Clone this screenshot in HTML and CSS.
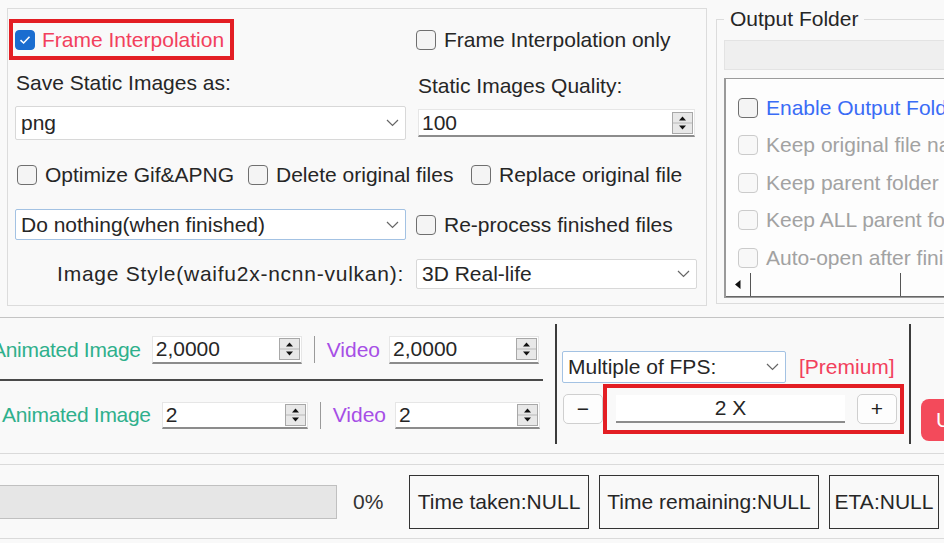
FILE: index.html
```html
<!DOCTYPE html>
<html>
<head>
<meta charset="utf-8">
<link rel="stylesheet" href="styles.css">
</head>
<body>
<div class="top">
  <div class="opts">
    <div class="row r1">
      <div class="cell-l">
        <label class="chk hl"><span class="box checked"><svg width="12" height="10" viewBox="0 0 12 10"><path d="M1.5 5.2 L4.6 8 L10.5 1.8" fill="none" stroke="#fff" stroke-width="1.6"/></svg></span><span class="pink">Frame Interpolation</span></label>
      </div>
      <div class="cell-r">
        <label class="chk"><span class="box"></span>Frame Interpolation only</label>
      </div>
    </div>
    <div class="row r2">
      <div class="cell-l">Save Static Images as:</div>
      <div class="cell-r">Static Images Quality:</div>
    </div>
    <div class="row r3">
      <div class="cell-l">
        <div class="select s-png"><span>png</span><svg width="13" height="8" viewBox="0 0 13 8"><polyline points="1,1 6.5,6.5 12,1" fill="none" stroke="#666" stroke-width="1.2"/></svg></div>
      </div>
      <div class="cell-r">
        <div class="spin s-q"><span class="v">100</span><svg class="sb" width="21" height="22" viewBox="0 0 21 22"><rect x="0.5" y="0.5" width="20" height="21" fill="#e8e8e8" stroke="#a8a8a8"/><line x1="1" y1="11" x2="20" y2="11" stroke="#b8b8b8"/><path d="M7 8.5 L10.5 4.5 L14 8.5Z" fill="#111"/><path d="M7 13.5 L10.5 17.5 L14 13.5Z" fill="#111"/></svg></div>
      </div>
    </div>
    <div class="row r4">
      <label class="chk c1"><span class="box"></span>Optimize Gif&amp;APNG</label>
      <label class="chk c2"><span class="box"></span>Delete original files</label>
      <label class="chk c3"><span class="box"></span>Replace original file</label>
    </div>
    <div class="row r5">
      <div class="cell-l">
        <div class="select focus s-do"><span>Do nothing(when finished)</span><svg width="13" height="8" viewBox="0 0 13 8"><polyline points="1,1 6.5,6.5 12,1" fill="none" stroke="#666" stroke-width="1.2"/></svg></div>
      </div>
      <div class="cell-r">
        <label class="chk"><span class="box"></span>Re-process finished files</label>
      </div>
    </div>
    <div class="row r6">
      <div class="cell-l style-lab">Image Style(waifu2x-ncnn-vulkan):</div>
      <div class="cell-r">
        <div class="select s-style"><span>3D Real-life</span><svg width="13" height="8" viewBox="0 0 13 8"><polyline points="1,1 6.5,6.5 12,1" fill="none" stroke="#666" stroke-width="1.2"/></svg></div>
      </div>
    </div>
  </div>

  <fieldset class="outf">
    <legend>Output Folder</legend>
    <div class="path"></div>
    <div class="list">
      <div class="items">
        <label class="chk blue"><span class="box"></span>Enable Output Folder</label>
        <label class="chk dis"><span class="box"></span>Keep original file name</label>
        <label class="chk dis"><span class="box"></span>Keep parent folder</label>
        <label class="chk dis"><span class="box"></span>Keep ALL parent folders</label>
        <label class="chk dis"><span class="box"></span>Auto-open after finished</label>
      </div>
      <div class="hscroll">
        <span class="arrow"><svg width="6" height="9" viewBox="0 0 6 9"><path d="M5.5 0 L0 4.5 L5.5 9Z" fill="#111"/></svg></span>
        <span class="thumb"></span>
        <span class="track"></span>
      </div>
    </div>
  </fieldset>
</div>

<div class="panel">
  <div class="ratios">
    <div class="rrow ra">
      <span class="green">Animated Image</span>
      <div class="spin w-a1"><span class="v">2,0000</span><svg class="sb" width="21" height="22" viewBox="0 0 21 22"><rect x="0.5" y="0.5" width="20" height="21" fill="#e8e8e8" stroke="#a8a8a8"/><line x1="1" y1="11" x2="20" y2="11" stroke="#b8b8b8"/><path d="M7 8.5 L10.5 4.5 L14 8.5Z" fill="#111"/><path d="M7 13.5 L10.5 17.5 L14 13.5Z" fill="#111"/></svg></div>
      <span class="sep"></span>
      <span class="purple">Video</span>
      <div class="spin w-a2"><span class="v">2,0000</span><svg class="sb" width="21" height="22" viewBox="0 0 21 22"><rect x="0.5" y="0.5" width="20" height="21" fill="#e8e8e8" stroke="#a8a8a8"/><line x1="1" y1="11" x2="20" y2="11" stroke="#b8b8b8"/><path d="M7 8.5 L10.5 4.5 L14 8.5Z" fill="#111"/><path d="M7 13.5 L10.5 17.5 L14 13.5Z" fill="#111"/></svg></div>
    </div>
    <div class="rrow rb">
      <span class="green">Animated Image</span>
      <div class="spin w-b1"><span class="v">2</span><svg class="sb" width="21" height="22" viewBox="0 0 21 22"><rect x="0.5" y="0.5" width="20" height="21" fill="#e8e8e8" stroke="#a8a8a8"/><line x1="1" y1="11" x2="20" y2="11" stroke="#b8b8b8"/><path d="M7 8.5 L10.5 4.5 L14 8.5Z" fill="#111"/><path d="M7 13.5 L10.5 17.5 L14 13.5Z" fill="#111"/></svg></div>
      <span class="sep"></span>
      <span class="purple">Video</span>
      <div class="spin w-b2"><span class="v">2</span><svg class="sb" width="21" height="22" viewBox="0 0 21 22"><rect x="0.5" y="0.5" width="20" height="21" fill="#e8e8e8" stroke="#a8a8a8"/><line x1="1" y1="11" x2="20" y2="11" stroke="#b8b8b8"/><path d="M7 8.5 L10.5 4.5 L14 8.5Z" fill="#111"/><path d="M7 13.5 L10.5 17.5 L14 13.5Z" fill="#111"/></svg></div>
    </div>
  </div>

  <div class="fps">
    <div class="fps-top">
      <div class="select focus s-fps"><span>Multiple of FPS:</span><svg width="13" height="8" viewBox="0 0 13 8"><polyline points="1,1 6.5,6.5 12,1" fill="none" stroke="#666" stroke-width="1.2"/></svg></div>
      <span class="pink prem">[Premium]</span>
    </div>
    <div class="fps-bot">
      <button class="pm">−</button>
      <div class="hl2">
        <div class="mult">2 X</div>
        <button class="pm">+</button>
      </div>
    </div>
  </div>

  <div class="go"><button class="start">U</button></div>
</div>

<div class="prog">
  <div class="bar"></div>
  <span class="pct">0%</span>
  <div class="tbox t1">Time taken:NULL</div>
  <div class="tbox t2">Time remaining:NULL</div>
  <div class="tbox t3">ETA:NULL</div>
</div>
</body>
</html>
```

FILE: styles.css
```css
* { box-sizing: border-box; }
html, body { margin: 0; padding: 0; }
body {
  width: 944px;
  height: 543px;
  overflow: hidden;
  background: #f9f9f9;
  font-family: "Liberation Sans", Arial, sans-serif;
  font-size: 21px;
  line-height: 24px;
  color: #262626;
}

/* ---------- top area ---------- */
.top { display: flex; height: 317px; }

.opts {
  flex: none;
  margin: 8px 0 0 7px;
  width: 700px;
  height: 298px;
  border: 1px solid #dcdcdc;
  padding: 10px 0 0 7px;
  display: flex;
  flex-direction: column;
}
.row { display: flex; }
.cell-l { flex: none; width: 391px; margin-right: 10px; }
.cell-r { flex: none; width: 281px; }

.r1 { height: 41px; align-items: center; }
.r2 { height: 46px; }
.r2 .cell-l { padding-top: 11px; padding-left: 1px; }
.r2 .cell-r { padding-top: 14px; padding-left: 2px; }
.r3 { height: 34px; align-items: center; }
.r4 { height: 69px; align-items: center; padding-left: 2px; }
.r5 { height: 31px; align-items: center; }
.r6 { padding-top: 19px; align-items: center; }

.chk { display: flex; align-items: center; gap: 8px; white-space: nowrap; }
.box {
  flex: none;
  width: 20px;
  height: 20px;
  border: 1.5px solid #6f6f6f;
  border-radius: 4px;
  background: #f4f4f4;
}
.box.checked {
  background: #1a6dd0;
  border-color: #1a6dd0;
  display: flex;
  align-items: center;
  justify-content: center;
}
.hl {
  display: inline-flex;
  height: 41px;
  margin-left: -6px;
  border: 4px solid #e31e24;
  padding: 0 6px 0 2px;
  gap: 7px;
}
.pink { color: #f2405c; }
.c1 { width: 231px; }
.c2 { width: 223px; }

.select {
  display: flex;
  align-items: center;
  justify-content: space-between;
  background: #fff;
  border: 1px solid #d8d8d8;
  border-radius: 2px;
  padding: 0 6px 0 5px;
  white-space: nowrap;
}
.select svg { flex: none; }
.select.focus { border-color: #a3c2e3; }
.s-png { height: 34px; }
.s-do { height: 31px; }
.s-style { height: 30px; }

.spin {
  display: flex;
  align-items: center;
  height: 28px;
  background: #fff;
  border: 1px solid #e6e6e6;
  border-bottom: 2px solid #8c8c8c;
  padding: 0 1px 0 3px;
}
.spin .v { flex: 1; }
.spin .sb { flex: none; }
.s-q { margin-left: 2px; width: 277px; }

.style-lab { text-align: right; padding-right: 2px; letter-spacing: 0.75px; white-space: nowrap; }

/* ---------- output folder ---------- */
.outf {
  flex: none;
  margin: 7px 0 0 9px;
  padding: 9px 0 0 7px;
  border: 1px solid #dcdcdc;
  width: 260px;
  height: 297px;
  min-width: 0;
}
.outf legend { padding: 0 6px; margin: 0; line-height: 24px; }
.path {
  height: 30px;
  background: #efefef;
  border: 1px solid #e3e3e3;
}
.list {
  margin-top: 8px;
  height: 220px;
  border: 1px solid #9a9a9a;
  border-left-width: 2px;
  background: #fdfdfd;
  display: flex;
  flex-direction: column;
}
.items { flex: 1; padding: 10px 0 0 12px; overflow: hidden; }
.items .chk { height: 37.5px; }
.blue { color: #3a6cf6; }
.dis { color: #a2a2a2; }
.dis .box { border-color: #cbcbcb; background: #f8f8f8; }
.hscroll { height: 24px; display: flex; border-bottom: 1px solid #666; }
.arrow { width: 24px; display: flex; align-items: center; padding-left: 9px; }
.thumb { width: 151px; border-left: 1px solid #555; border-right: 1px solid #555; }
.track { flex: 1; }

/* ---------- ratios panel ---------- */
.panel {
  display: flex;
  height: 137px;
  border-top: 1px solid #c4c4c4;
  border-bottom: 1px solid #dadada;
}
.ratios { flex: none; width: 543px; }
.rrow { display: flex; align-items: center; white-space: nowrap; }
.ra { height: 63px; padding-top: 2px; margin-left: -8px; border-bottom: 2px solid #4a4a4a; }
.rb { height: 68px; padding-top: 0; margin-left: 2px; }
.green { color: #2fb08c; letter-spacing: -0.3px; }
.purple { color: #a64fe6; }
.sep { flex: none; width: 1px; height: 27px; background: #9a9a9a; margin: 0 12px; }
.rrow .green { margin-right: 11px; }
.rrow .purple { margin-right: 9px; }
.w-a1 { width: 150px; }
.w-a2 { width: 150px; }
.w-b1 { width: 146px; height: 27px; }
.w-b2 { width: 145px; height: 27px; }

.fps {
  flex: none;
  margin: 6px 0 0 12px;
  width: 356px;
  height: 120px;
  border-left: 2px solid #3c3c3c;
  border-right: 2px solid #3c3c3c;
  padding: 27px 0 0 5px;
}
.fps-top { display: flex; align-items: center; }
.s-fps { width: 224px; height: 32px; }
.prem { margin-left: 13px; }
.fps-bot { display: flex; align-items: center; margin-top: 1px; }
.pm {
  flex: none;
  width: 40px;
  height: 30px;
  padding: 0;
  background: #fdfdfd;
  border: 1px solid #cfcfcf;
  border-radius: 5px;
  font-family: "Liberation Sans", Arial, sans-serif;
  font-size: 21px;
  color: #222;
}
.fps-bot > .pm { margin-left: 1px; }
.hl2 {
  display: flex;
  align-items: center;
  width: 301px;
  height: 50px;
  border: 4px solid #e31e24;
  padding: 0 3px 0 9px;
}
.mult {
  width: 229px;
  height: 28px;
  margin-right: 12px;
  background: #fff;
  border-bottom: 2px solid #8c8c8c;
  text-align: center;
  line-height: 26px;
}

.go { flex: none; margin: 81px 0 0 10px; }
.start {
  width: 90px;
  height: 42px;
  background: #f34a5b;
  border: none;
  border-radius: 8px;
  color: #fff;
  font-family: "Liberation Sans", Arial, sans-serif;
  font-size: 21px;
  text-align: left;
  padding: 0 0 0 15px;
}

/* ---------- progress ---------- */
.prog {
  display: flex;
  align-items: center;
  margin-top: 10px;
  height: 75px;
  border-top: 1px solid #dadada;
  border-bottom: 1px solid #dadada;
}
.bar {
  flex: none;
  margin-left: -2px;
  width: 339px;
  height: 34px;
  background: #e6e6e6;
  border: 1px solid #c0c0c0;
}
.pct { margin-left: 16px; width: 56px; color: #333; }
.tbox {
  flex: none;
  height: 54px;
  border: 1px solid #333;
  display: flex;
  align-items: center;
  justify-content: center;
  white-space: nowrap;
}
.t1 { width: 180px; }
.t2 { width: 220px; margin-left: 10px; }
.t3 { width: 110px; margin-left: 10px; }
```
